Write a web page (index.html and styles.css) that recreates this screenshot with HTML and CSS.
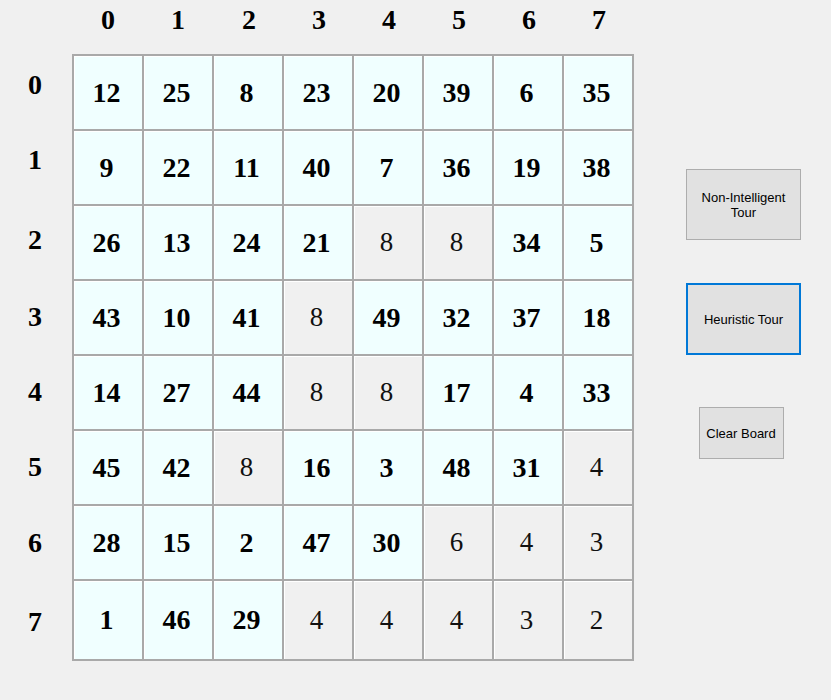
FILE: index.html
```html
<!DOCTYPE html>
<html>
<head>
<meta charset="utf-8">
<title>Knight's Tour</title>
<link rel="stylesheet" href="styles.css">
</head>
<body>
<div class="app">
  <div class="row-labels">
    <span class="rl">0</span><span class="rl">1</span><span class="rl">2</span><span class="rl">3</span>
    <span class="rl">4</span><span class="rl">5</span><span class="rl">6</span><span class="rl">7</span>
  </div>
  <div class="board-area">
    <div class="col-heads">
      <span>0</span><span>1</span><span>2</span><span>3</span><span>4</span><span>5</span><span>6</span><span>7</span>
    </div>
    <div class="board">
      <div class="cell v">12</div><div class="cell v">25</div><div class="cell v">8</div><div class="cell v">23</div><div class="cell v">20</div><div class="cell v">39</div><div class="cell v">6</div><div class="cell v">35</div>
      <div class="cell v">9</div><div class="cell v">22</div><div class="cell v">11</div><div class="cell v">40</div><div class="cell v">7</div><div class="cell v">36</div><div class="cell v">19</div><div class="cell v">38</div>
      <div class="cell v">26</div><div class="cell v">13</div><div class="cell v">24</div><div class="cell v">21</div><div class="cell u">8</div><div class="cell u">8</div><div class="cell v">34</div><div class="cell v">5</div>
      <div class="cell v">43</div><div class="cell v">10</div><div class="cell v">41</div><div class="cell u">8</div><div class="cell v">49</div><div class="cell v">32</div><div class="cell v">37</div><div class="cell v">18</div>
      <div class="cell v">14</div><div class="cell v">27</div><div class="cell v">44</div><div class="cell u">8</div><div class="cell u">8</div><div class="cell v">17</div><div class="cell v">4</div><div class="cell v">33</div>
      <div class="cell v">45</div><div class="cell v">42</div><div class="cell u">8</div><div class="cell v">16</div><div class="cell v">3</div><div class="cell v">48</div><div class="cell v">31</div><div class="cell u">4</div>
      <div class="cell v">28</div><div class="cell v">15</div><div class="cell v">2</div><div class="cell v">47</div><div class="cell v">30</div><div class="cell u">6</div><div class="cell u">4</div><div class="cell u">3</div>
      <div class="cell v">1</div><div class="cell v">46</div><div class="cell v">29</div><div class="cell u">4</div><div class="cell u">4</div><div class="cell u">4</div><div class="cell u">3</div><div class="cell u">2</div>
    </div>
  </div>
  <div class="buttons">
    <button class="btn btn-nonint">Non-Intelligent<br>Tour</button>
    <button class="btn btn-heur">Heuristic Tour</button>
    <button class="btn btn-clear">Clear Board</button>
  </div>
</div>
</body>
</html>
```

FILE: styles.css
```css
html, body {
  margin: 0;
  padding: 0;
  background: #f0f0f0;
}

body {
  width: 831px;
  height: 700px;
  overflow: hidden;
  font-family: "Liberation Serif", "Times New Roman", serif;
  color: #000;
}

.app {
  display: flex;
  align-items: flex-start;
}

.row-labels {
  width: 72px;
  display: flex;
  flex-direction: column;
  align-items: center;
  padding-right: 2px;
  box-sizing: border-box;
}

.rl {
  display: block;
  height: 30px;
  line-height: 30px;
  font-size: 28px;
  font-weight: bold;
  width: 100%;
  text-align: center;
}

.rl:nth-child(1) { margin-top: 70px; }
.rl:nth-child(2) { margin-top: 45px; }
.rl:nth-child(3) { margin-top: 50px; }
.rl:nth-child(4) { margin-top: 47px; }
.rl:nth-child(5) { margin-top: 45px; }
.rl:nth-child(6) { margin-top: 45px; }
.rl:nth-child(7) { margin-top: 46px; }
.rl:nth-child(8) { margin-top: 49px; }

.board-area {
  display: flex;
  flex-direction: column;
  width: 562px;
}

.col-heads {
  display: flex;
  gap: 2px;
  padding: 5px 2px 0 2px;
  height: 49px;
}

.col-heads span {
  width: 68px;
  box-sizing: border-box;
  text-align: center;
  font-size: 28px;
  font-weight: bold;
  line-height: 30px;
}

.col-heads span:nth-child(n+3) { padding-left: 2px; }

.board {
  display: grid;
  grid-template-columns: repeat(8, 68px);
  grid-template-rows: repeat(7, 73px) 78px;
  gap: 2px;
  padding: 2px;
  background: #a9a9a9;
}

.cell {
  display: flex;
  align-items: center;
  justify-content: center;
  font-size: 28px;
  padding-right: 3px;
  box-shadow: inset 1px 1px 0 #ffffff;
}

.cell.v {
  background: #f0ffff;
  font-weight: bold;
}

.cell.u {
  background: #f0f0f0;
  font-weight: normal;
  font-size: 27px;
  color: #111;
}

.buttons {
  margin-left: 52px;
  margin-top: 169px;
  width: 115px;
  display: flex;
  flex-direction: column;
  align-items: center;
}

.btn {
  font-family: "Liberation Sans", Arial, sans-serif;
  font-size: 13px;
  line-height: 15px;
  color: #000;
  background: #e1e1e1;
  border: 1px solid #adadad;
  padding: 0;
  margin: 0;
  box-sizing: border-box;
  text-align: center;
}

.btn-nonint {
  width: 115px;
  height: 71px;
}

.btn-heur {
  width: 115px;
  height: 72px;
  margin-top: 43px;
  border: 2px solid #0078d7;
}

.btn-clear {
  width: 85px;
  height: 52px;
  margin-top: 52px;
  margin-left: -5px;
}
```
